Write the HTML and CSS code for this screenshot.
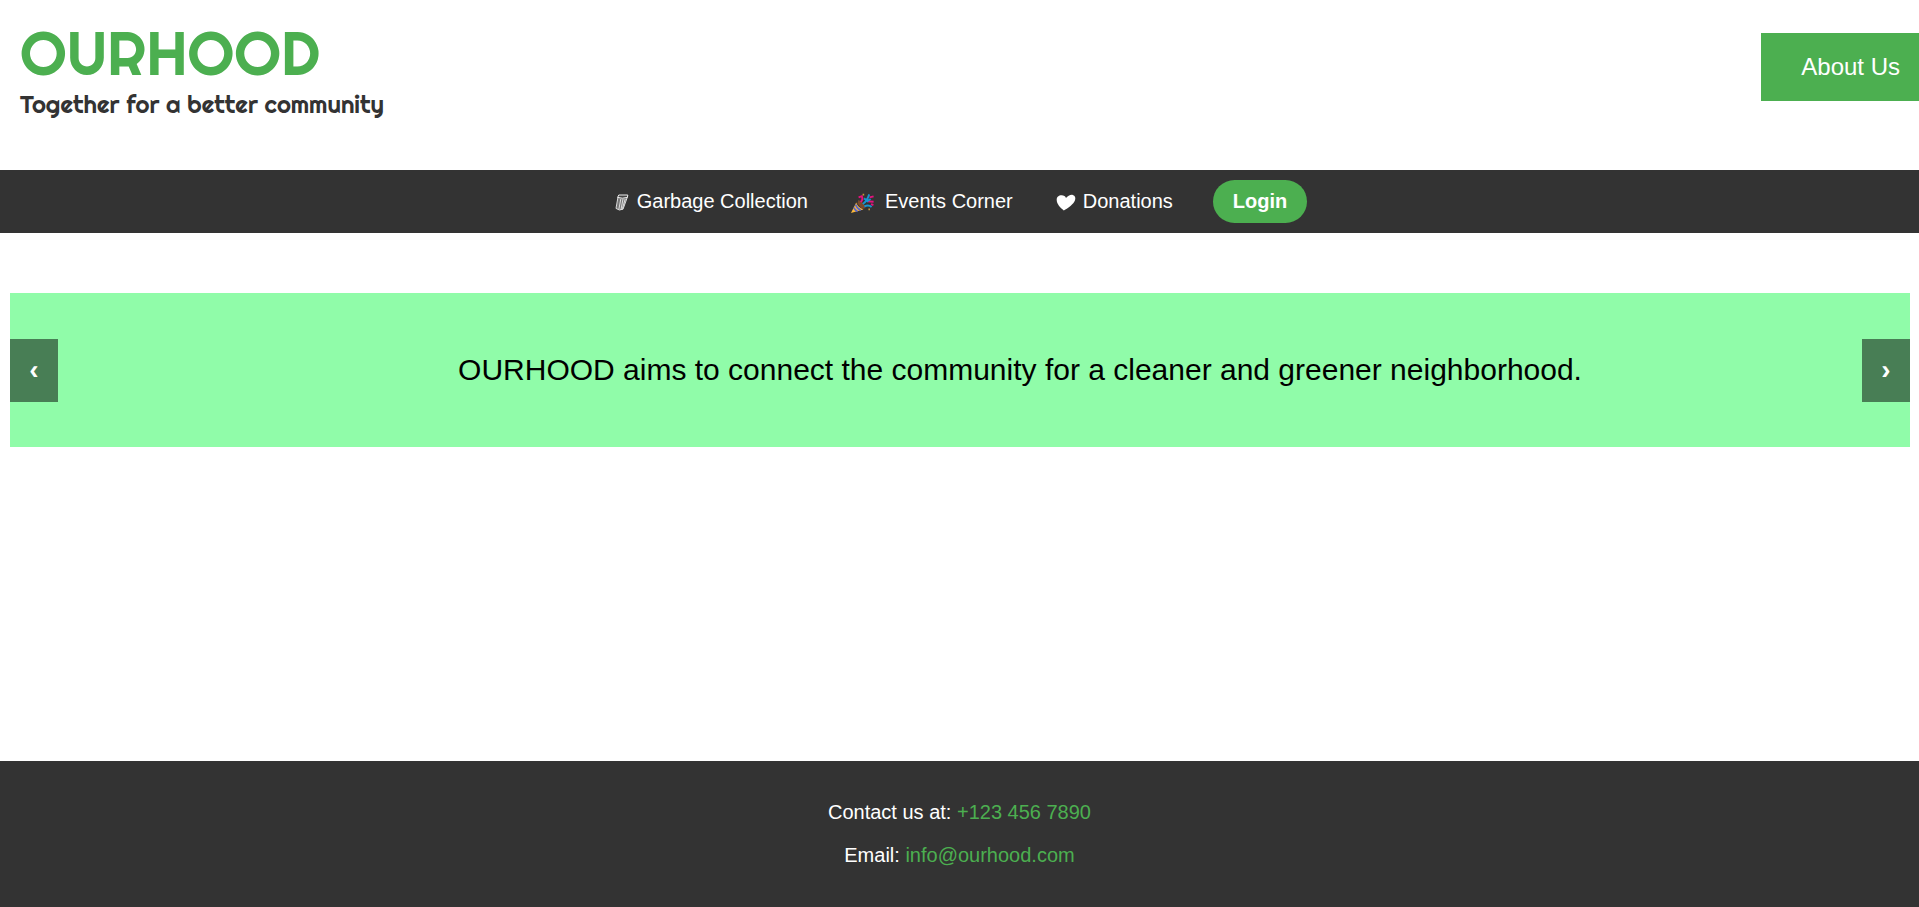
FILE: index.html
```html
<!DOCTYPE html>
<html lang="en">
<head>
<meta charset="utf-8">
<meta name="viewport" content="width=device-width, initial-scale=1">
<title>OURHOOD</title>
<link rel="stylesheet" href="styles.css">
</head>
<body>
<header class="header">
  <div class="brand">
    <h1 class="brand-name">OURHOOD</h1>
    <p class="brand-tagline">Together for a better community</p>
  </div>
  <a class="about" href="#about">About Us</a>
</header>
<nav class="nav" aria-label="Main">
  <a class="nav-link" href="#garbage">
    <svg class="icon icon-bin" viewBox="0 0 16 20" aria-hidden="true">
      <path d="M4.2 5 2.2 16.2Q5.2 19.2 9 17.4L13.2 5z" fill="#777"/>
      <path d="M4 5 2 16.4Q5.2 19.2 9 17.2L13.4 5M6.8 7 4.8 17.6M9 7 7 17.6M11.2 7 8.4 16.8" fill="none" stroke="#ddd" stroke-width="1"/>
      <path d="M3.6 5.4 4.8 3H13.8l-.4 2.4Q8.4 7 3.6 5.4z" fill="#444" stroke="#eee" stroke-width="1"/>
    </svg>
    <span>Garbage Collection</span>
  </a>
  <a class="nav-link" href="#events">
    <svg class="icon icon-party" viewBox="0 0 24 20" aria-hidden="true">
      <path d="M7.4 7Q13.6 9.4 14.6 15L11 16 6.4 10.4z" fill="#7a4a2c"/>
      <path d="M5.2 9.6 0 20 12.4 16.4Q7 14.8 5.2 9.6z" fill="#fdb93a"/>
      <path d="M4.6 11.4Q5.8 15.4 9.8 17.2M2.8 14.6Q4 17.4 6.6 18.4" stroke="#5966c9" stroke-width="1.6" fill="none"/>
      <path d="M9.6 9Q12.4 7 10.8 3.2L7.6 4.4M16.6 8.4 22.6 8.8M18.6 4.4 22.6 3.4M20 11.2 22.4 12" stroke="#e5127d" stroke-width="1.9" fill="none"/>
      <path d="M11.8 11Q16 8.4 18.2 1.4M13 5.4 15.6 7.2M13.4 13.4Q17.6 11.4 20.6 14M15.6 8.6 19.6 6" stroke="#1695d3" stroke-width="1.9" fill="none"/>
      <path d="M11.6.8h1.6v1.6h-1.6zM17.4 15.6H19v1.6h-1.6z" fill="#c99b35"/>
    </svg>
    <span>Events Corner</span>
  </a>
  <a class="nav-link" href="#donations">
    <svg class="icon icon-heart" viewBox="0 0 20 18" aria-hidden="true">
      <path d="M7.8 17.4C4.2 14.6.8 11 .7 7 .6 3.8 3 2.2 5.6 2.3 7.8 2.4 9.4 3.4 10 5 11.8 2.8 14.4 1.4 16.8 1.9 19.2 2.4 19.8 4.8 19 7.2 17.6 11 12.2 15.4 7.8 17.4z" fill="#fff"/>
    </svg>
    <span>Donations</span>
  </a>
  <a class="login" href="#login">Login</a>
</nav>
<main class="main">
  <section class="slider" aria-label="Highlights">
    <button class="arrow" type="button" aria-label="Previous">‹</button>
    <p class="slide">OURHOOD aims to connect the community for a cleaner and greener neighborhood.</p>
    <button class="arrow" type="button" aria-label="Next">›</button>
  </section>
</main>
<footer class="footer">
  <p>Contact us at: <a href="tel:+1234567890">+123 456 7890</a></p>
  <p>Email: <a href="mailto:info@ourhood.com">info@ourhood.com</a></p>
</footer>
</body>
</html>
```
FILE: styles.css
```css
* {
  box-sizing: border-box;
}

body {
  margin: 0;
  min-height: 100vh;
  display: flex;
  flex-direction: column;
  background: #fff;
  color: #000;
  font: 20px/23px "Liberation Sans", Arial, sans-serif;
}

a {
  text-decoration: none;
}

h1,
p {
  margin: 0;
}

.header {
  display: flex;
  justify-content: space-between;
  align-items: flex-start;
  padding: 17px 0 50px 20px;
}

.brand {
  font-family: Righteous, Lato, sans-serif;
}

.brand-name {
  color: #4caf50;
  font-size: 60px;
  line-height: 72px;
  font-weight: 400;
}

.brand-tagline {
  color: #333;
  font-size: 24px;
  line-height: 31px;
}

.about {
  margin-top: 16px;
  padding: 20px 19px 20px 40px;
  background: #4caf50;
  color: #fff;
  font-size: 24px;
  line-height: 28px;
}

.nav {
  display: flex;
  flex-wrap: wrap;
  justify-content: center;
  align-items: center;
  gap: 40px;
  padding: 10px;
  background: #333;
}

.nav-link {
  display: flex;
  align-items: center;
  color: #fff;
}

.icon {
  flex: none;
}

.icon-bin {
  width: 16px;
  height: 20px;
  margin: 0 7px 0 2px;
}

.icon-party {
  width: 24px;
  height: 20px;
  margin: 2px 10px 0 3px;
}

.icon-heart {
  width: 20px;
  height: 18px;
  margin: 0 7px 0 3px;
}

.login {
  padding: 10px 20px;
  border-radius: 25px;
  background: #4caf50;
  color: #fff;
  font-weight: 700;
}

.main {
  flex: 1;
  padding: 60px 9px 60px 10px;
}

.slider {
  display: flex;
  align-items: center;
  background: #90fca9;
}

.slide {
  flex: 1;
  padding: 60px 0 60px 120px;
  font-size: 30px;
  line-height: 34px;
  text-align: center;
}

.arrow {
  width: 48px;
  padding: 17px 0 19px;
  border: 0;
  background: #487e55;
  color: #fff;
  font: 700 28px/27px "Liberation Sans", Arial, sans-serif;
  cursor: pointer;
}

.footer {
  display: flex;
  flex-direction: column;
  gap: 20px;
  padding: 40px 20px;
  background: #333;
  color: #fff;
  text-align: center;
}

.footer a {
  color: #4caf50;
}
```
